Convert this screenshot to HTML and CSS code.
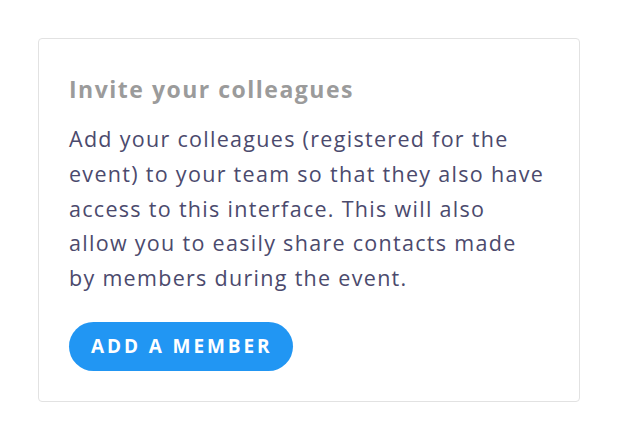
FILE: index.html
```html
<!DOCTYPE html>
<html>
<head>
<meta charset="utf-8">
<link rel="stylesheet" href="styles.css">
</head>
<body>
<div class="card">
  <h2 class="title">Invite your colleagues</h2>
  <p class="text">Add your colleagues (registered for the<br>event) to your team so that they also have<br>access to this interface. This will also<br>allow you to easily share contacts made<br>by members during the event.</p>
  <button class="btn">ADD A MEMBER</button>
</div>
</body>
</html>
```
FILE: styles.css
```css
html, body { margin: 0; background: #fff; }
body { padding: 38px; font-family: "Open Sans", sans-serif; }
.card {
  width: 542px;
  height: 364px;
  box-sizing: border-box;
  border: 1.5px solid #e2e2e2;
  border-radius: 4px;
  padding: 34px 30px 0 30px;
  display: flex;
  flex-direction: column;
  align-items: flex-start;
}
.title {
  margin: 0;
  font-size: 23px;
  font-weight: 700;
  color: #9b9b9b;
  line-height: 32px;
  letter-spacing: 1.5px;
}
.text {
  margin: 17px 0 0 0;
  font-size: 21.5px;
  line-height: 34.75px;
  color: #4b4a6d;
  letter-spacing: 1.3px;
}
.btn {
  margin-top: 26px;
  height: 49px;
  padding: 0 21px 0 22px;
  border: none;
  border-radius: 25px;
  background: #2196f3;
  color: #fff;
  font-family: "Open Sans", sans-serif;
  font-weight: 700;
  font-size: 19px;
  letter-spacing: 2.9px;
}
```
